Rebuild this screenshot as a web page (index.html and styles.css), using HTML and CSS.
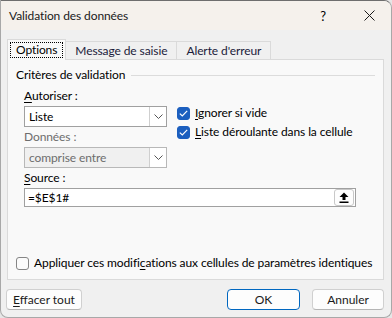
FILE: index.html
```html
<!DOCTYPE html>
<html lang="fr">
<head>
<meta charset="utf-8">
<title>Validation des données</title>
<link rel="stylesheet" href="styles.css">
</head>
<body>
<div class="window">
  <div class="titlebar">
    <span class="title">Validation des données</span>
    <span class="help">?</span>
    <span class="close"><svg width="11" height="11" viewBox="0 0 11 11"><path d="M0.5 0.5L10.5 10.5M10.5 0.5L0.5 10.5" stroke="#1a1a1a" stroke-width="1"/></svg></span>
  </div>
  <div class="body">
    <div class="tabs">
      <div class="tab active"><span class="focus">Options</span></div>
      <div class="tab">Message de saisie</div>
      <div class="tab">Alerte d'erreur</div>
    </div>
    <div class="panel">
      <div class="group-title"><span>Critères de validation</span><span class="rule"></span></div>
      <div class="criteria">
        <div class="left">
          <div class="lbl"><u>A</u>utoriser :</div>
          <div class="combo"><span class="val">Liste</span><span class="drop"><svg width="9" height="5" viewBox="0 0 9 5"><path d="M0.5 0.5L4.5 4.5L8.5 0.5" fill="none" stroke="#555" stroke-width="1"/></svg></span></div>
          <div class="lbl disabled">Données :</div>
          <div class="combo off"><span class="val">comprise entre</span><span class="drop"><svg width="9" height="5" viewBox="0 0 9 5"><path d="M0.5 0.5L4.5 4.5L8.5 0.5" fill="none" stroke="#555" stroke-width="1"/></svg></span></div>
        </div>
        <div class="right">
          <div class="check"><span class="box on"><svg width="9" height="7" viewBox="0 0 9 7"><path d="M0.8 3.6L3.3 6L8.2 0.9" fill="none" stroke="#fff" stroke-width="1.2"/></svg></span><span><u>I</u>gnorer si vide</span></div>
          <div class="check"><span class="box on"><svg width="9" height="7" viewBox="0 0 9 7"><path d="M0.8 3.6L3.3 6L8.2 0.9" fill="none" stroke="#fff" stroke-width="1.2"/></svg></span><span><u>L</u>iste déroulante dans la cellule</span></div>
        </div>
      </div>
      <div class="lbl src-lbl"><u>S</u>ource :</div>
      <div class="source"><span class="val">=$E$1#</span><span class="pick"><svg width="10" height="11" viewBox="0 0 10 11"><path d="M5 0.5L9.5 5H6.5V8H3.5V5H0.5Z" fill="#000"/><rect x="0.5" y="9.5" width="9" height="1.5" fill="#000"/></svg></span></div>
      <div class="check apply"><span class="box"></span><span>Appliquer ces modifi<u>c</u>ations aux cellules de paramètres identiques</span></div>
    </div>
    <div class="buttons">
      <button class="btn clear"><u>E</u>ffacer tout</button>
      <span class="spacer"></span>
      <button class="btn ok">OK</button>
      <button class="btn cancel">Annuler</button>
    </div>
  </div>
</div>
</body>
</html>
```

FILE: styles.css
```css
* { box-sizing: border-box; }
html, body { margin: 0; padding: 0; }
body {
  width: 392px;
  height: 318px;
  background: #e6e6e6;
  font-family: Lato, "Noto Sans", "Liberation Sans", sans-serif;
  font-size: 12px;
  line-height: 16px;
  letter-spacing: -0.1px;
  color: #000;
  overflow: hidden;
}
u { text-decoration: underline; text-underline-offset: 2px; }

.window {
  width: 392px;
  height: 318px;
  background: #f0f0f0;
  border: 1px solid #a8a8a8;
  border-top-color: #6e6e6e;
  border-radius: 0 8px 8px 8px;
  overflow: hidden;
  display: flex;
  flex-direction: column;
}

.titlebar {
  height: 29px;
  background: #f5f1ec;
  display: flex;
  align-items: center;
  padding-left: 8px;
}
.title { flex: 1; color: #1a1a1a; }
.help { width: 12px; text-align: center; margin-right: 35px; font-size: 13px; }
.close { display: flex; margin-right: 16px; }

.body {
  flex: 1;
  padding: 9px 6px 0 6px;
  display: flex;
  flex-direction: column;
}

.tabs { display: flex; height: 20px; align-items: flex-end; position: relative; z-index: 1; }
.tab {
  height: 18px;
  border: 1px solid #dadada;
  border-bottom: none;
  margin-left: -1px;
  padding: 0 9px;
  line-height: 17px;
  color: #1b1b3a;
  background: #f0f0f0;
  white-space: nowrap;
}
.tab.active {
  height: 21px;
  margin-left: 0;
  margin-bottom: -1px;
  background: #f9f9f9;
  padding: 2px 2px 0 2px;
  line-height: 16px;
}
.focus { display: block; border: 1px dotted #000; padding: 0 5px; height: 16px; line-height: 14px; color: #000; }

.panel {
  height: 221px;
  width: 377px;
  border: 1px solid #dadada;
  background: #f9f9f9;
  padding: 7px 8px 8px 8px;
  display: flex;
  flex-direction: column;
}
.group-title { display: flex; align-items: center; }
.group-title .rule { flex: 1; height: 1px; background: #dcdcdc; margin-left: 6px; }

.criteria { display: flex; padding-left: 8px; }
.left { width: 143px; }
.right { padding-top: 22px; margin-left: 10px; }

.lbl { margin-top: 5px; }
.left .lbl + .combo { margin-top: 2px; }
.lbl.disabled { margin-top: 2px; color: #6d6d6d; }
.src-lbl { margin-top: 2px; margin-left: 8px; }

.combo {
  height: 21px;
  border: 1px solid #a0a0a0;
  background: #fff;
  display: flex;
  align-items: center;
}
.combo .val { flex: 1; padding-left: 4px; }
.combo .drop {
  width: 17px;
  height: 19px;
  border-left: 1px solid #cfcfcf;
  display: flex;
  align-items: center;
  justify-content: center;
  background: #fff;
}
.combo.off { background: #f0f0f0; border-color: #b8b8b8; margin-top: 2px; }
.combo.off .val { color: #6d6d6d; }

.check { display: flex; align-items: center; margin-bottom: 3px; white-space: nowrap; }
.box {
  flex: none;
  width: 13px;
  height: 13px;
  border-radius: 3px;
  border: 1px solid #858585;
  background: #fbfbfb;
  margin-right: 5px;
  display: flex;
  align-items: center;
  justify-content: center;
}
.box.on { background: #1c5fbf; border-color: #1c5fbf; }

.source {
  margin: 2px 0 0 8px;
  width: 332px;
  height: 19px;
  border: 1px solid #a0a0a0;
  background: #fff;
  display: flex;
  align-items: center;
}
.source .val { flex: 1; padding-left: 3px; }
.pick {
  width: 20px;
  height: 17px;
  margin-right: 1px;
  border: 1px solid #c8c8c8;
  border-radius: 3px;
  background: #fdfdfd;
  display: flex;
  align-items: center;
  justify-content: center;
}

.apply { margin-top: auto; margin-bottom: 0; }

.buttons { display: flex; margin-top: 9px; }
.spacer { flex: 1; }
.btn {
  font: inherit;
  height: 21px;
  padding: 0;
  border: 1px solid #d0d0d0;
  border-bottom-color: #b5b5b5;
  border-radius: 4px;
  background: #fdfdfd;
  color: #1a1a1a;
}
.clear { width: 76px; margin-left: -1px; }
.ok { width: 73px; border-color: #0067c0; margin-right: 12px; }
.cancel { width: 72px; margin-right: 1px; }
```
